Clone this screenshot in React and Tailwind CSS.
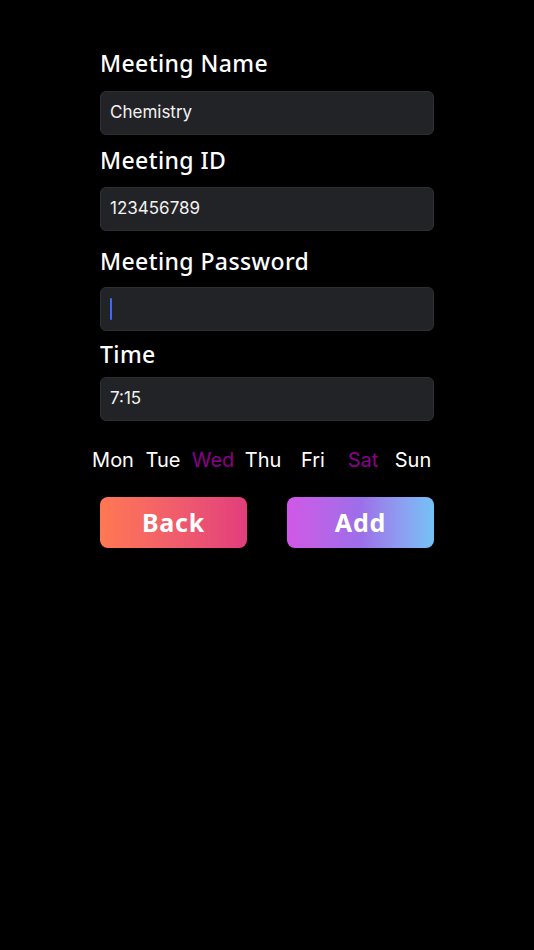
import React from "react";

const labelCls =
  "h-[30px] flex items-center text-[23px] font-medium text-white tracking-[0.4px] font-['Noto_Sans',sans-serif]";
const inputCls =
  "h-[44px] w-full flex items-center px-[9px] rounded-[6px] bg-[#222326] border border-[#2e2f33] text-[17px] text-[#f2f2f2] font-['Inter',sans-serif]";
const btnCls =
  "w-[147px] h-[51px] rounded-[8px] text-white text-[25px] font-bold tracking-[0.8px] font-['Noto_Sans',sans-serif]";

const days = [
  { d: "Mon", on: false },
  { d: "Tue", on: false },
  { d: "Wed", on: true },
  { d: "Thu", on: false },
  { d: "Fri", on: false },
  { d: "Sat", on: true },
  { d: "Sun", on: false },
];

export default function App() {
  return (
    <div className="w-[534px] h-[950px] bg-black flex flex-col">
      <div className="w-[334px] ml-[100px] mt-[48px] flex flex-col">
        <div className={labelCls}>Meeting Name</div>
        <div className={inputCls + " mt-[13px]"}>Chemistry</div>

        <div className={labelCls + " mt-[10px]"}>Meeting ID</div>
        <div className={inputCls + " mt-[12px]"}>123456789</div>

        <div className={labelCls + " mt-[15px]"}>Meeting Password</div>
        <div className={inputCls + " mt-[11px]"}>
          <span className="w-[2px] h-[22px] bg-[#3b6cf0] rounded-full" />
        </div>

        <div className={labelCls + " mt-[8px]"}>Time</div>
        <div className={inputCls + " mt-[8px]"}>7:15</div>
      </div>

      <div className="w-[350px] ml-[88px] mt-[25px] flex font-['Inter',sans-serif] text-[20px] h-[28px] items-center">
        {days.map((x) => (
          <span
            key={x.d}
            className={"w-[50px] text-center " + (x.on ? "text-[#8b008b]" : "text-white")}
          >
            {x.d}
          </span>
        ))}
      </div>

      <div className="w-[334px] ml-[100px] mt-[23px] flex justify-between">
        <button className={btnCls + " bg-gradient-to-r from-[#ff7852] to-[#e23d7c]"}>
          Back
        </button>
        <button className={btnCls + " bg-gradient-to-r from-[#d157e6] via-[#9c6ee9] to-[#72c2f6]"}>
          Add
        </button>
      </div>
    </div>
  );
}
